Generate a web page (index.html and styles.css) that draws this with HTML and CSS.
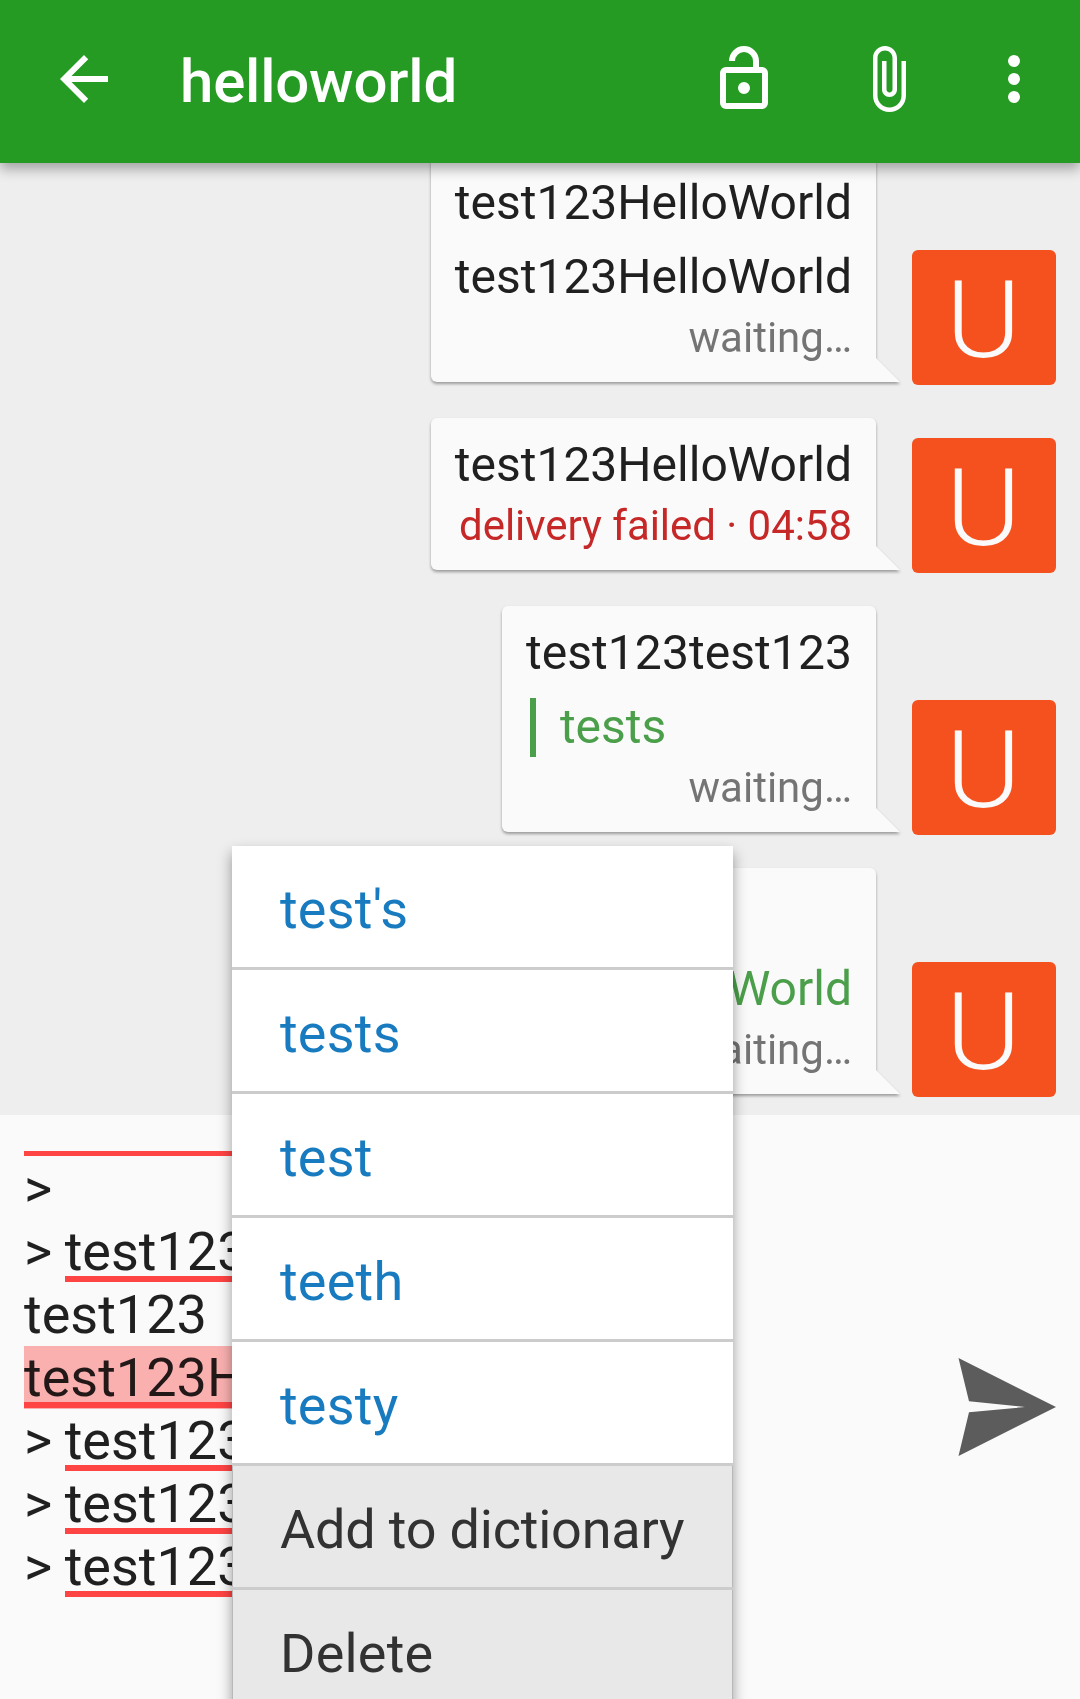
FILE: index.html
```html
<!DOCTYPE html>
<html lang="en">
<head>
<meta charset="utf-8">
<title>helloworld</title>
<link rel="stylesheet" href="styles.css">
</head>
<body>
<div class="app">
  <header class="toolbar">
    <svg class="icon" viewBox="0 0 24 24"><path d="M20 11H7.83l5.59-5.59L12 4l-8 8 8 8 1.41-1.41L7.83 13H20v-2z"/></svg>
    <h1 class="title">helloworld</h1>
    <div class="actions">
      <svg class="icon" viewBox="0 0 24 24"><path d="M18 20V10H6v10h12M18 8a2 2 0 0 1 2 2v10a2 2 0 0 1-2 2H6a2 2 0 0 1-2-2V10a2 2 0 0 1 2-2h9V6a3 3 0 0 0-6 0H7a5 5 0 0 1 10 0v2h1m-6 9a2 2 0 1 1 0-4 2 2 0 0 1 0 4z"/></svg>
      <svg class="icon" viewBox="0 0 24 24"><path d="M16.5 6v11.5c0 2.21-1.79 4-4 4s-4-1.79-4-4V5c0-1.38 1.12-2.5 2.5-2.5s2.5 1.12 2.5 2.5v10.5c0 .55-.45 1-1 1s-1-.45-1-1V6H10v9.5c0 1.38 1.12 2.5 2.5 2.5s2.5-1.12 2.5-2.5V5c0-2.21-1.79-4-4-4S7 2.79 7 5v12.5c0 3.04 2.46 5.5 5.5 5.5s5.5-2.46 5.5-5.5V6z"/></svg>
      <svg class="icon icon-more" viewBox="0 0 24 24"><circle cx="12" cy="6" r="2"/><circle cx="12" cy="12" r="2"/><circle cx="12" cy="18" r="2"/></svg>
    </div>
  </header>

  <main class="chat">
    <div class="row">
      <div class="bubble">
        <p class="text">test123HelloWorld</p>
        <p class="text">test123HelloWorld</p>
        <p class="meta">waiting…</p>
      </div>
      <div class="avatar"><span class="initial">U</span></div>
    </div>
    <div class="row">
      <div class="bubble">
        <p class="text">test123HelloWorld</p>
        <p class="meta failed">delivery failed · 04:58</p>
      </div>
      <div class="avatar"><span class="initial">U</span></div>
    </div>
    <div class="row">
      <div class="bubble">
        <p class="text wide">test123test123</p>
        <p class="text quote">tests</p>
        <p class="meta">waiting…</p>
      </div>
      <div class="avatar"><span class="initial">U</span></div>
    </div>
    <div class="row">
      <div class="bubble">
        <p class="text">test123</p>
        <p class="text quote">test123HelloWorld</p>
        <p class="meta">waiting…</p>
      </div>
      <div class="avatar"><span class="initial">U</span></div>
    </div>
  </main>

  <footer class="composer">
    <div class="editor">
      <p><span class="typo">test123HelloWorld</span></p>
      <p>&gt;</p>
      <p>&gt; <span class="typo">test123HelloWorld</span></p>
      <p>test123</p>
      <p><span class="typo selected">test123HelloWorld</span></p>
      <p>&gt; <span class="typo">test123HelloWorld</span></p>
      <p>&gt; <span class="typo">test123HelloWorld</span></p>
      <p>&gt; <span class="typo">test123HelloWorld</span></p>
    </div>
    <svg class="send" viewBox="0 0 98 98"><path d="M.5 0 98 49 .5 98 11 54.300 67 49 11 43.200z"/></svg>
  </footer>

  <div class="menu">
    <div class="item">test's</div>
    <div class="item">tests</div>
    <div class="item">test</div>
    <div class="item">teeth</div>
    <div class="item">testy</div>
    <div class="item command long">Add to dictionary</div>
    <div class="item command">Delete</div>
  </div>
</div>
</body>
</html>
```
FILE: styles.css
```css
* { box-sizing: border-box; }
body { margin: 0; font-family: Roboto, sans-serif; color: #202020; }
p, h1 { margin: 0; }

.app {
  position: relative;
  display: flex;
  flex-direction: column;
  width: 1080px;
  height: 1699px;
  overflow: hidden;
  background: #eee;
}

.toolbar {
  position: relative;
  z-index: 1;
  display: flex;
  align-items: center;
  flex: none;
  height: 163px;
  padding: 0 30px 5px 48px;
  background: #259b24;
  box-shadow: 0 6px 12px rgba(0, 0, 0, .32);
}
.icon { display: block; width: 72px; height: 72px; fill: #fff; }
.title {
  margin-left: 60px;
  padding-top: 6px;
  font-size: 60px;
  line-height: 70px;
  font-weight: 500;
  letter-spacing: -.2px;
  color: #fff;
}
.actions { display: flex; gap: 72px; margin-left: auto; }
.icon-more { margin-left: -18px; }

.chat {
  display: flex;
  flex-direction: column;
  justify-content: flex-end;
  gap: 33px;
  height: 952px;
  flex: none;
  padding: 0 24px 18px;
  overflow: hidden;
}
.row { display: flex; justify-content: flex-end; align-items: flex-end; gap: 36px; flex: none; }
.bubble {
  position: relative;
  margin-bottom: 3px;
  padding: 18px 24px 20px;
  border-radius: 6px 6px 0 6px;
  background: #fafafa;
  filter: drop-shadow(0 2px 1.5px rgba(0, 0, 0, .35));
}
.bubble::after {
  content: "";
  position: absolute;
  left: 100%;
  bottom: 0;
  width: 24px;
  height: 24px;
  background: #fafafa;
  clip-path: polygon(0 0, 100% 100%, 0 100%);
}
.text { font-size: 48px; line-height: 58px; }
.text + .text { margin-top: 16px; }
.wide { letter-spacing: .07px; }
.meta { margin-top: 7px; font-size: 42px; line-height: 49px; text-align: right; color: #747474; }
.failed { color: #c62828; letter-spacing: -.04px; }
.quote {
  margin-left: 4px;
  padding: 0 0 1px 24px;
  border-left: 6px solid #4b9f4a;
  color: #4b9f4a;
}
.quote + .meta { margin-top: 6px; }
.avatar {
  display: flex;
  align-items: center;
  justify-content: center;
  width: 144px;
  height: 135px;
  border-radius: 6px;
  background: #f5511e;
  color: #fafafa;
  font-size: 108px;
  font-weight: 300;
  line-height: 135px;
}
.initial { padding-top: 5px; transform: scaleX(1.06); }

.composer {
  display: flex;
  flex: 1;
  align-items: center;
  padding: 0 24px;
  background: #fafafa;
}
.editor {
  display: flex;
  flex-direction: column;
  justify-content: flex-end;
  align-self: flex-start;
  flex: 1;
  height: 447px;
  margin-top: 36px;
  overflow: hidden;
  font-size: 54px;
  line-height: 63px;
  word-spacing: -1px;
}
.editor p { flex: none; height: 63px; }
.typo {
  display: inline-block;
  height: 63px;
  background: linear-gradient(#ff4444, #ff4444) 0 56px / 100% 6px no-repeat;
}
.selected { background-color: #fbb0b0; color: #231818; }
.send { width: 98px; height: 98px; fill: #5c5c5c; }

.menu {
  position: absolute;
  z-index: 2;
  left: 232px;
  top: 846px;
  width: 501px;
  background: #fff;
  box-shadow: 0 7px 13px rgba(0, 0, 0, .38);
}
.item {
  height: 124px;
  padding: 32px 0 0 48px;
  border-bottom: 3px solid #ccc;
  font-size: 54px;
  line-height: 63px;
  letter-spacing: .2px;
  color: #187bc0;
}
.command {
  background: #e8e8e8;
  color: #323232;
  box-shadow: inset 1px 0 #b8b8b8, inset -1px 0 #b8b8b8;
}
.long { letter-spacing: -.2px; }
```
